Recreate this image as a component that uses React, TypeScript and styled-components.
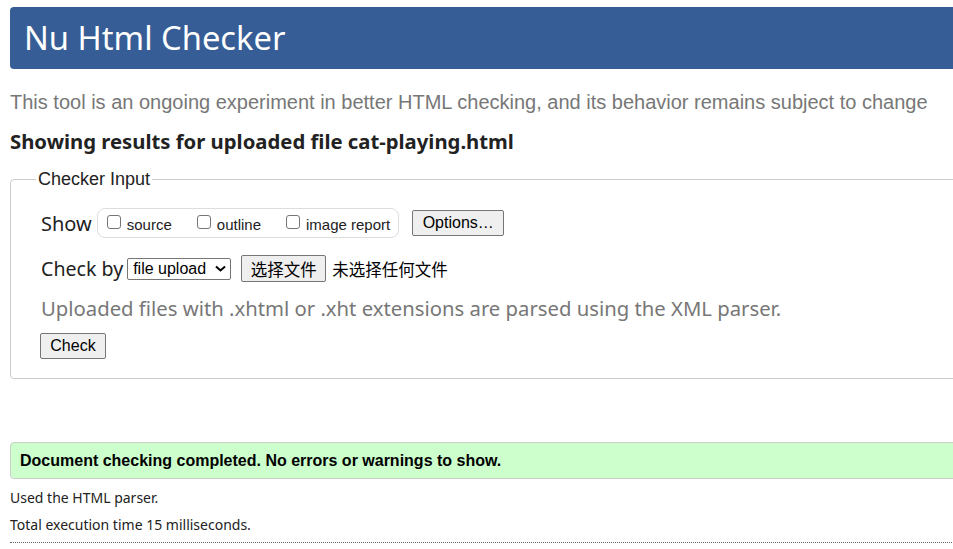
import styled, { createGlobalStyle } from "styled-components"

const GlobalStyle = createGlobalStyle`
  html, body {
    margin: 0;
    padding: 0;
    background: #fff;
    overflow: hidden;
  }
  body {
    font-family: "Liberation Sans", Arial, sans-serif;
    color: #000;
  }
`

const uiFont = `"Noto Sans", "Open Sans", sans-serif`

const Page = styled.div`
  width: 1180px;
  padding: 7px 10px 0;
`

const Header = styled.header`
  height: 62px;
  display: flex;
  align-items: center;
  padding: 0 14px;
  border-radius: 4px;
  background: #365d95;
`

const Title = styled.h1`
  margin: 0 0 2px;
  font-family: ${uiFont};
  font-weight: 400;
  font-size: 32.7px;
  color: #fff;
`

const Tagline = styled.p`
  margin: 20px 0 0;
  font-size: 20px;
  line-height: 26px;
  color: #777;
`

const ResultsTitle = styled.h2`
  margin: 13px 0 0;
  font-family: ${uiFont};
  font-weight: 700;
  font-size: 20.3px;
  line-height: 26px;
  color: #222;
`

const Fieldset = styled.fieldset`
  margin: 15px 0 0;
  padding: 18px 30px 19px;
  border: 1px solid #ccc;
  border-radius: 4px;
`

const Legend = styled.legend`
  padding: 0 2px;
  margin-left: -5px;
  font-size: 18px;
  color: #222;
`

const Row = styled.div<{ $gap?: number }>`
  display: flex;
  align-items: center;
  gap: 10px;
  margin-top: ${({ $gap }) => $gap ?? 0}px;
`

const RowLabel = styled.span`
  font-family: ${uiFont};
  font-size: 20px;
  color: #222;
  margin-right: -5px;
`

const CheckByLabel = styled(RowLabel)`
  font-size: 19.6px;
  margin-right: -6px;
`

const CheckGroup = styled.div`
  display: flex;
  align-items: center;
  gap: 25px;
  height: 28px;
  padding: 0 8px 0 9px;
  border: 1px solid #ddd;
  border-radius: 8px;
`

const CheckItem = styled.label`
  display: flex;
  align-items: center;
  gap: 6px;
  font-size: 15px;
  color: #222;
  padding-top: 3px;
`

const Box = styled.span`
  width: 12px;
  height: 12px;
  border: 1px solid #767676;
  border-radius: 3px;
  margin-top: -6px;
`

const Button = styled.button`
  height: 26px;
  padding: 0 9px;
  font-family: "Liberation Sans", Arial, sans-serif;
  font-size: 16px;
  color: #000;
  background: #efefef;
  border: 1px solid #767676;
  border-radius: 2px;
`

const OptionsButton = styled(Button)`
  width: 92px;
  margin-left: 3px;
`

const Select = styled.div`
  display: flex;
  align-items: center;
  justify-content: space-between;
  width: 104px;
  height: 22px;
  padding: 0 4px 0 5px;
  box-sizing: border-box;
  font-size: 16px;
  border: 1px solid #767676;
  border-radius: 2px;
`

const FileButton = styled(Button)`
  font-family: "Noto Sans CJK SC", sans-serif;
  width: 85px;
  height: 27px;
  padding: 0;
  font-size: 16.5px;
`

const NoFile = styled.span`
  margin-left: -4px;
  font-family: "Noto Sans CJK SC", sans-serif;
  font-size: 16.5px;
`

const Hint = styled.p`
  margin: 13px 0 0;
  font-family: ${uiFont};
  font-size: 20.3px;
  line-height: 26px;
  color: #777;
`

const CheckButton = styled(Button)`
  display: block;
  width: 66px;
  margin-top: 12px;
  margin-left: -1px;
  padding: 0;
`

const Success = styled.div`
  margin-top: 63px;
  height: 35px;
  display: flex;
  align-items: center;
  padding: 0 9px;
  border: 1px solid #ccc;
  border-radius: 4px;
  background: #ccffcc;
  font-weight: 700;
  font-size: 16px;
`

const Note = styled.p`
  margin: 0;
  font-family: ${uiFont};
  font-size: 14px;
  line-height: 27px;
  color: #222;
`

const Notes = styled.div`
  margin-top: 5px;
  padding-bottom: 4px;
  border-bottom: 1px dotted #666;
`

function Chevron() {
  return (
    <svg width="11" height="7" viewBox="0 0 11 7">
      <path d="M1 1.5 5.5 5.5 10 1.5" fill="none" stroke="#000" strokeWidth="2" />
    </svg>
  )
}

export default function App() {
  return (
    <Page>
      <GlobalStyle />
      <Header>
        <Title>Nu Html Checker</Title>
      </Header>
      <Tagline>
        This tool is an ongoing experiment in better HTML checking, and its behavior remains subject to change
      </Tagline>
      <ResultsTitle>Showing results for uploaded file cat-playing.html</ResultsTitle>

      <Fieldset>
        <Legend>Checker Input</Legend>
        <Row>
          <RowLabel>Show</RowLabel>
          <CheckGroup>
            <CheckItem><Box />source</CheckItem>
            <CheckItem><Box />outline</CheckItem>
            <CheckItem><Box />image report</CheckItem>
          </CheckGroup>
          <OptionsButton>Options…</OptionsButton>
        </Row>
        <Row $gap={17}>
          <CheckByLabel>Check by</CheckByLabel>
          <Select>file upload <Chevron /></Select>
          <FileButton>选择文件</FileButton>
          <NoFile>未选择任何文件</NoFile>
        </Row>
        <Hint>Uploaded files with .xhtml or .xht extensions are parsed using the XML parser.</Hint>
        <CheckButton>Check</CheckButton>
      </Fieldset>

      <Success>Document checking completed. No errors or warnings to show.</Success>
      <Notes>
        <Note>Used the HTML parser.</Note>
        <Note>Total execution time 15 milliseconds.</Note>
      </Notes>
    </Page>
  )
}
